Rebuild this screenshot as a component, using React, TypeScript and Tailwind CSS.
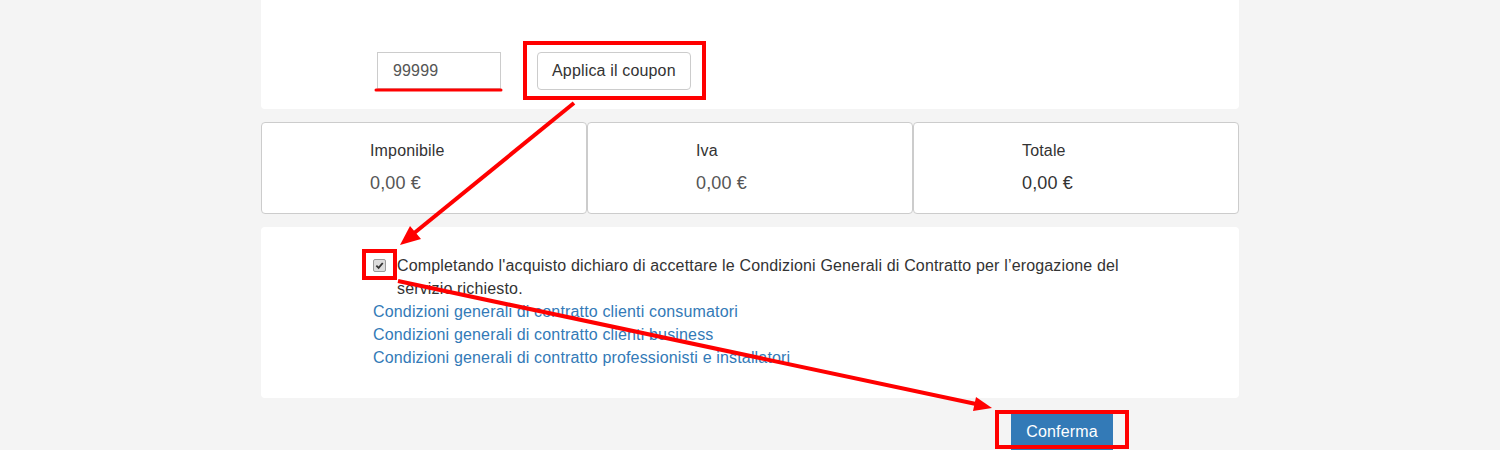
import React from "react";

const font = { fontFamily: '"Liberation Sans", Arial, Helvetica, sans-serif' };

const totals = [
  { label: "Imponibile", value: "0,00 €", strong: false },
  { label: "Iva", value: "0,00 €", strong: false },
  { label: "Totale", value: "0,00 €", strong: true },
];

const links = [
  "Condizioni generali di contratto clienti consumatori",
  "Condizioni generali di contratto clienti business",
  "Condizioni generali di contratto professionisti e installatori",
];

function CheckBox() {
  return (
    <span className="mt-[5px] flex h-[13px] w-[13px] shrink-0 items-center justify-center rounded-[2px] border border-[#9a9a9a] bg-[#dcdcdc]">
      <svg width="9" height="9" viewBox="0 0 10 10">
        <path d="M1.5 5.2 L4 7.6 L8.6 2.2" fill="none" stroke="#333" strokeWidth="2" />
      </svg>
    </span>
  );
}

// annotations drawn on top of the screenshot
function Annotations() {
  return (
    <svg
      className="pointer-events-none absolute left-0 top-0"
      width="1500"
      height="450"
      viewBox="0 0 1500 450"
    >
      <g stroke="#ff0000" fill="none" strokeWidth="4">
        <rect x="525" y="43" width="179" height="55" />
        <rect x="364" y="251" width="31" height="27" />
        <rect x="997" y="412" width="130" height="35" />
        <line x1="574" y1="103" x2="413" y2="234" />
        <line x1="398" y1="281" x2="976" y2="404" />
      </g>
      <line x1="376" y1="90" x2="501" y2="90" stroke="#ff0000" strokeWidth="3" strokeLinecap="round" />
      <polygon points="400,245 410,226 421,239" fill="#ff0000" />
      <polygon points="992,408 976,397 973,411" fill="#ff0000" />
    </svg>
  );
}

export default function App() {
  return (
    <div
      className="relative flex h-[450px] w-full flex-col overflow-hidden bg-[#f4f4f4] tracking-[0.16px]"
      style={font}
    >
      <div className="mx-auto flex w-[978px] flex-1 flex-col">
        <div className="flex h-[109px] items-start gap-9 rounded-b bg-white pl-[116px] pt-[52px]">
          <div className="flex h-[37px] w-[124px] items-center border border-[#ccc] px-[15px] text-[16px] text-[#555]">
            99999
          </div>
          <button className="h-[38px] rounded border border-[#ccc] bg-white px-[14px] text-[16px] text-[#333]">
            Applica il coupon
          </button>
        </div>

        <div className="mt-[13px] grid grid-cols-3">
          {totals.map((t) => (
            <div
              key={t.label}
              className="h-[92px] rounded border border-[#ccc] bg-white pl-[108px] pt-[17px]"
            >
              <div className="text-[16px] leading-[22px] text-[#333]">{t.label}</div>
              <div
                className={
                  t.strong
                    ? "mt-[9px] text-[18px] leading-[25px] text-[#333]"
                    : "mt-[9px] text-[18px] leading-[25px] text-[#555]"
                }
              >
                {t.value}
              </div>
            </div>
          ))}
        </div>

        <div className="mt-[13px] h-[171px] rounded bg-white pl-[112px] pt-[27px] text-[16px] leading-[23px]">
          <div className="w-[756px]">
            <div className="flex items-start gap-[11px] text-[#333]">
              <CheckBox />
              <p>
                Completando l'acquisto dichiaro di accettare le Condizioni Generali di Contratto per
                l’erogazione del servizio richiesto.
              </p>
            </div>
            {links.map((l) => (
              <div key={l} className="text-[#337ab7]">
                {l}
              </div>
            ))}
          </div>
        </div>

        <div className="mt-[15px] pl-[750px]">
          <button className="h-[38px] w-[102px] bg-[#337ab7] text-[16px] text-white">Conferma</button>
        </div>
      </div>
      <div className="h-px w-full bg-[#74aae2]" />
      <Annotations />
    </div>
  );
}
